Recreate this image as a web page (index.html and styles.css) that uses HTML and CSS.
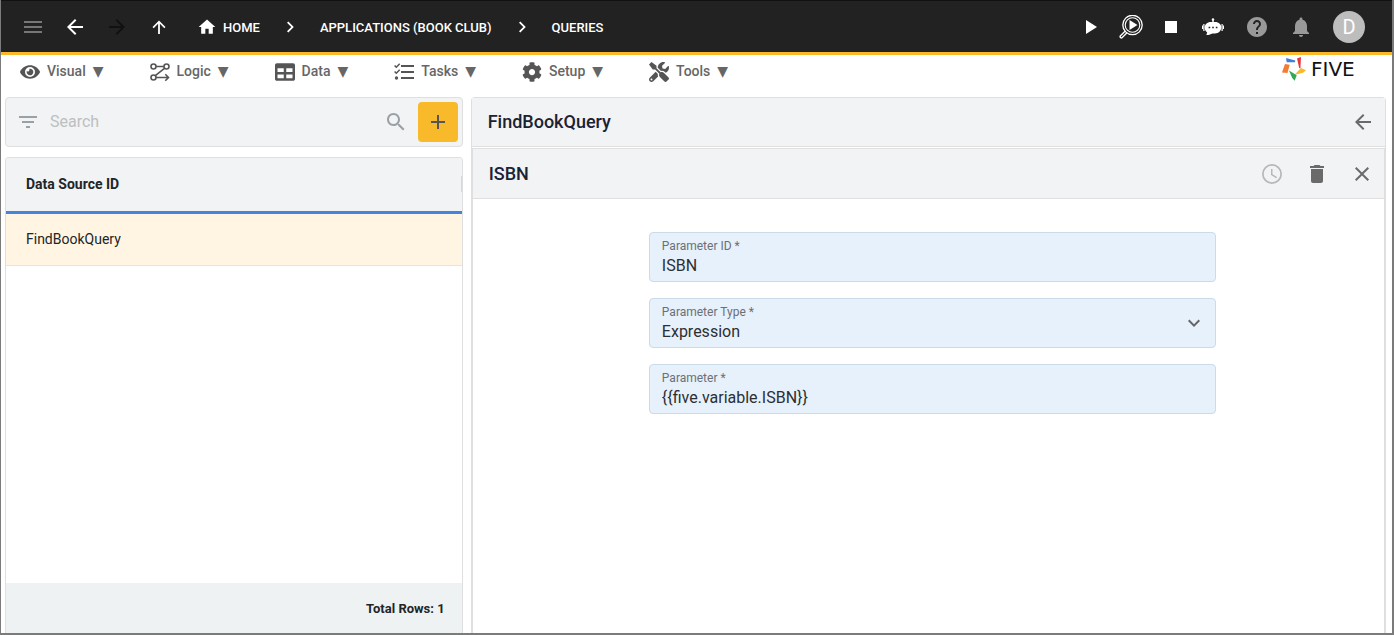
FILE: index.html
```html
<!DOCTYPE html>
<html lang="en">
<head>
<meta charset="utf-8">
<title>Five - Queries</title>
<link rel="stylesheet" href="styles.css">
</head>
<body>
<div class="window">
  <header class="topbar">
    <div class="nav-buttons">
      <button class="icon-btn dim" aria-label="Menu"><svg viewBox="0 0 24 24"><path d="M3 18h18v-2H3v2zm0-5h18v-2H3v2zm0-7v2h18V6H3z"/></svg></button>
      <button class="icon-btn" aria-label="Back"><svg viewBox="0 0 24 24"><path d="M20 11H7.800l5.600-5.600L12 4l-8 8 8 8 1.400-1.400L7.800 13H20z"/></svg></button>
      <button class="icon-btn off" aria-label="Forward" disabled><svg viewBox="0 0 24 24"><path d="M12 4l-1.400 1.400 5.600 5.600H4v2h12.200l-5.600 5.600L12 20l8-8z"/></svg></button>
      <button class="icon-btn" aria-label="Up"><svg viewBox="0 0 24 24"><path d="M5.500 12l1.200 1.200 4.400-4.400V19h1.800V8.800l4.400 4.400 1.200-1.200L12 5.500z"/></svg></button>
    </div>
    <nav class="crumbs" aria-label="Breadcrumb">
      <a href="#home"><svg class="home" viewBox="0 0 24 24"><path d="M10 20v-6h4v6h5v-8h3L12 3 2 12h3v8z"/></svg>HOME</a>
      <svg class="sep" viewBox="0 0 24 24"><path d="M9 16.300L13.300 12 9 7.700l1.300-1.200 5.500 5.500-5.500 5.500z"/></svg>
      <a href="#applications">APPLICATIONS (BOOK CLUB)</a>
      <svg class="sep" viewBox="0 0 24 24"><path d="M9 16.300L13.300 12 9 7.700l1.300-1.200 5.500 5.500-5.500 5.500z"/></svg>
      <a href="#queries">QUERIES</a>
    </nav>
    <div class="actions">
      <div class="run-tools">
        <button class="icon-btn" aria-label="Run"><svg viewBox="0 0 24 24"><path d="M7 5v14l11-7z"/></svg></button>
        <button class="icon-btn" aria-label="Inspect"><svg viewBox="0 0 24 24"><g fill="none" stroke="#fff"><circle cx="13.500" cy="10" r="9.700" stroke-width="1.300"/><circle cx="13.500" cy="10" r="7.300" stroke-width="1.100"/><path d="M6.300 16l-5 5a1 1 0 0 0 0 1.300l.4.4a1 1 0 0 0 1.300 0l5-5" stroke-width="1.300"/></g><path d="M10.500 5v10l8-5z"/></svg></button>
        <button class="icon-btn" aria-label="Stop"><svg viewBox="0 0 24 24"><path d="M6 6h12v12H6z"/></svg></button>
      </div>
      <div class="user-tools">
        <button class="icon-btn" aria-label="Assistant"><svg viewBox="0 0 24 24"><path fill-rule="evenodd" d="M12 3.300a1.300 1.300 0 0 1 .7 2.400V7h1.300c4 0 6.300 2.500 6.300 5.500S17.500 18.500 14 18.500h-2.500L7.500 20l-2.200.1.900-2.600C4.700 16.500 3.700 14.500 3.700 12.500c0-3 2.300-5.500 6.300-5.500h1.300V5.700A1.300 1.300 0 0 1 12 3.300zM7.600 11.700v1.600h1.600v-1.600zm3.600 0v1.600h1.600v-1.600zm3.600 0v1.600h1.600v-1.600z"/><path d="M2.300 9h1.200v7H2.300zM20.500 9h1.200v7h-1.200zM1 10.500h1V14H1zm21 0h1V14h-1z"/></svg></button>
        <button class="icon-btn gray" aria-label="Help"><svg viewBox="0 0 24 24"><path d="M12 2C6.480 2 2 6.480 2 12s4.480 10 10 10 10-4.480 10-10S17.520 2 12 2zm1 17h-2v-2h2v2zm2.070-7.750l-.9.920C13.450 12.900 13 13.500 13 15h-2v-.5c0-1.100.45-2.100 1.170-2.830l1.240-1.260c.37-.36.59-.86.59-1.410 0-1.100-.9-2-2-2s-2 .9-2 2H8c0-2.210 1.790-4 4-4s4 1.790 4 4c0 .88-.36 1.680-.93 2.250z"/></svg></button>
        <button class="icon-btn gray" aria-label="Notifications"><svg viewBox="0 0 24 24"><path d="M12 22c1.100 0 2-.9 2-2h-4c0 1.100.89 2 2 2zm6-6v-5c0-3.070-1.640-5.640-4.500-6.320V4c0-.83-.67-1.500-1.500-1.500s-1.500.67-1.500 1.500v.68C7.630 5.360 6 7.920 6 11v5l-2 2v1h16v-1l-2-2z"/></svg></button>
        <button class="avatar" aria-label="Account">D</button>
      </div>
    </div>
  </header>

  <div class="menubar">
    <nav class="menus" aria-label="Main">
      <button class="menu"><svg viewBox="0 0 576 512"><path d="M572.520 241.400C518.290 135.590 410.930 64 288 64S57.680 135.640 3.480 241.410a32.350 32.350 0 0 0 0 29.190C57.710 376.410 165.070 448 288 448s230.320-71.640 284.520-177.410a32.350 32.350 0 0 0 0-29.190zM288 400a144 144 0 1 1 144-144 143.930 143.930 0 0 1-144 144zm0-240a95.310 95.310 0 0 0-25.310 3.790 47.850 47.850 0 0 1-66.900 66.900A95.780 95.780 0 1 0 288 160z"/></svg><span>Visual</span> <span class="caret">▼</span></button>
      <button class="menu"><svg viewBox="0 0 20 20"><g fill="none" stroke="#555" stroke-width="1.600"><circle cx="3.500" cy="4.500" r="2.500"/><circle cx="16.500" cy="4.500" r="2.500"/><circle cx="3.500" cy="15.500" r="2.500"/><path d="M6 4.500h8M14.800 6.200L5.300 13.700M6 15.500h12M15.300 12.300l3.200 3.200-3.200 3.200"/></g></svg><span>Logic</span> <span class="caret">▼</span></button>
      <button class="menu"><svg viewBox="0 0 512 512"><path d="M464 32H48C21.490 32 0 53.490 0 80v352c0 26.510 21.490 48 48 48h416c26.510 0 48-21.490 48-48V80c0-26.510-21.490-48-48-48zM224 416H64v-96h160v96zm0-160H64v-96h160v96zm224 160H288v-96h160v96zm0-160H288v-96h160v96z"/></svg><span>Data</span> <span class="caret">▼</span></button>
      <button class="menu"><svg viewBox="0 0 20 20"><path d="M7 3h13v2H7zM7 9h13v2H7zM7 15h13v2H7z"/><circle cx="2.500" cy="16" r="1.700"/><path fill="none" stroke="#555" stroke-width="1.500" d="M.6 3.500l1.700 1.700L5.700 1.800M.6 9.500l1.700 1.700 3.400-3.400"/></svg><span>Tasks</span> <span class="caret">▼</span></button>
      <button class="menu"><svg viewBox="0 0 512 512"><path d="M487.400 315.700l-42.600-24.600c4.300-23.200 4.300-47 0-70.200l42.600-24.600c4.900-2.800 7.100-8.600 5.500-14-11.100-35.600-30-67.800-54.700-94.600-3.800-4.100-10-5.100-14.800-2.300L380.800 110c-17.900-15.400-38.500-27.300-60.800-35.100V25.800c0-5.600-3.900-10.500-9.400-11.700-36.700-8.200-74.300-7.800-109.200 0-5.500 1.200-9.400 6.100-9.400 11.700V75c-22.200 7.900-42.800 19.800-60.800 35.100L88.700 85.500c-4.900-2.800-11-1.900-14.800 2.300-24.700 26.700-43.600 58.900-54.700 94.600-1.700 5.400.6 11.200 5.500 14L67.300 221c-4.300 23.200-4.300 47 0 70.200l-42.600 24.600c-4.900 2.800-7.100 8.600-5.500 14 11.100 35.600 30 67.800 54.700 94.600 3.800 4.100 10 5.100 14.800 2.300l42.600-24.600c17.900 15.400 38.500 27.300 60.800 35.100v49.200c0 5.600 3.900 10.500 9.400 11.700 36.700 8.200 74.300 7.800 109.200 0 5.500-1.200 9.400-6.100 9.400-11.700v-49.200c22.200-7.900 42.800-19.800 60.800-35.100l42.600 24.600c4.900 2.800 11 1.900 14.800-2.300 24.700-26.700 43.600-58.900 54.700-94.600 1.500-5.500-.7-11.300-5.600-14.100zM256 336c-44.100 0-80-35.900-80-80s35.900-80 80-80 80 35.900 80 80-35.900 80-80 80z"/></svg><span>Setup</span> <span class="caret">▼</span></button>
      <button class="menu"><svg viewBox="0 0 512 512"><path d="M501.100 395.700L384 278.600c-23.100-23.100-57.600-27.600-85.400-13.900L192 158.100V96L64 0 0 64l96 128h62.100l106.600 106.600c-13.600 27.800-9.200 62.300 13.900 85.400l117.100 117.100c14.600 14.600 38.200 14.600 52.700 0l52.700-52.700c14.500-14.600 14.500-38.200 0-52.700zM331.700 225c28.300 0 54.900 11 74.900 31l19.400 19.400c15.800-6.900 30.800-16.500 43.800-29.500 37.100-37.100 49.700-89.300 37.900-136.700-2.200-9-13.500-12.100-20.100-5.500l-74.400 74.400-67.900-11.300L334 98.900l74.400-74.400c6.600-6.600 3.400-17.900-5.700-20.200-47.400-11.700-99.600.9-136.600 37.900-28.500 28.500-41.900 66.100-41.200 103.600l82.100 82.100c8.100-1.900 16.500-2.900 24.700-2.900zm-103.900 82l-56.700-56.700L18.700 402.800c-25 25-25 65.500 0 90.500s65.500 25 90.500 0l123.600-123.600c-7.600-19.900-9.900-41.600-5-62.700zM64 472c-13.200 0-24-10.800-24-24 0-13.300 10.700-24 24-24s24 10.700 24 24c0 13.200-10.700 24-24 24z"/></svg><span>Tools</span> <span class="caret">▼</span></button>
    </nav>
    <a class="brand" href="#five">
      <svg viewBox="0 0 24 24"><path fill="#3f7fd9" d="M4 1l9.300 2.500-.3 1.800H4.700z"/><path fill="#e5383b" d="M15 1.500L19 0l-.6 11.500-1.200-.6z"/><path fill="#fbb829" d="M12.500 17.700L19 11l5 2.300-3 2.500z"/><path fill="#34a853" d="M7 13.500l7.700 4.700-2 5.500-2.500-2.700z"/><path fill="#f47b30" d="M3 7l4.700.8L5.500 16 0 15.500z"/></svg>
      <span>FIVE</span>
    </a>
  </div>

  <main class="content">
    <section class="list">
      <div class="search">
        <svg class="filter" viewBox="0 0 24 24"><path d="M10 18h4v-2h-4v2zM3 6v2h18V6H3zm3 7h12v-2H6v2z"/></svg>
        <input type="search" placeholder="Search" aria-label="Search">
        <svg class="lens" viewBox="0 0 24 24"><path d="M15.500 14h-.79l-.28-.27C15.410 12.590 16 11.110 16 9.500 16 5.910 13.090 3 9.500 3S3 5.910 3 9.500 5.910 16 9.500 16c1.610 0 3.090-.59 4.230-1.570l.27.28v.79l5 4.990L20.490 19l-4.990-5zm-6 0C7.010 14 5 11.990 5 9.500S7.010 5 9.500 5 14 7.010 14 9.500 11.990 14 9.500 14z"/></svg>
        <button class="add" aria-label="Add"><svg viewBox="0 0 24 24"><path d="M19 13h-6v6h-2v-6H5v-2h6V5h2v6h6v2z"/></svg></button>
      </div>
      <div class="grid">
        <table>
          <thead><tr><th scope="col"><span class="col-head">Data Source ID</span></th></tr></thead>
          <tbody><tr><td>FindBookQuery</td></tr></tbody>
        </table>
        <div class="total">Total Rows: 1</div>
      </div>
    </section>

    <section class="detail">
      <div class="bar">
        <h1>FindBookQuery</h1>
        <button class="icon-btn tool" aria-label="Back to list"><svg viewBox="0 0 24 24"><path d="M20 11H7.800l5.600-5.600L12 4l-8 8 8 8 1.400-1.400L7.800 13H20z"/></svg></button>
      </div>
      <div class="sheet">
        <div class="bar">
          <h2>ISBN</h2>
          <div class="tools">
            <button class="icon-btn tool faded" aria-label="History"><svg viewBox="0 0 24 24"><path d="M12 2a10 10 0 1 0 0 20 10 10 0 0 0 0-20zm0 18.300a8.300 8.300 0 1 1 0-16.600 8.300 8.300 0 0 1 0 16.600zM12.500 7H11v6l5.200 3.200.8-1.300-4.500-2.700z"/></svg></button>
            <button class="icon-btn tool" aria-label="Delete"><svg viewBox="0 0 24 24"><path d="M6 19c0 1.100.9 2 2 2h8c1.100 0 2-.9 2-2V7H6v12zM19 4h-3.500l-1-1h-5l-1 1H5v2h14V4z"/></svg></button>
            <button class="icon-btn tool" aria-label="Close"><svg viewBox="0 0 24 24"><path d="M19 6.400L17.600 5 12 10.600 6.400 5 5 6.400l5.600 5.600L5 17.600 6.400 19l5.600-5.600 5.600 5.600 1.400-1.400-5.600-5.600z"/></svg></button>
          </div>
        </div>
        <form class="form">
          <div class="field">
            <label for="pid">Parameter ID *</label>
            <input id="pid" type="text" value="ISBN">
          </div>
          <div class="field pick">
            <label for="ptype">Parameter Type *</label>
            <select id="ptype"><option>Expression</option></select>
            <svg viewBox="0 0 24 24"><path d="M7.400 8.600L12 13.200l4.600-4.600L18 10l-6 6-6-6z"/></svg>
          </div>
          <div class="field">
            <label for="param">Parameter *</label>
            <input id="param" type="text" value="{{five.variable.ISBN}}">
          </div>
        </form>
      </div>
    </section>
  </main>
</div>
</body>
</html>
```
FILE: styles.css
```css
* { box-sizing: border-box; }

body {
  margin: 0;
  font-family: Roboto, "Liberation Sans", sans-serif;
  font-size: 14px;
  color: #212529;
  background: #fff;
}

button {
  border: 0;
  padding: 0;
  background: none;
  font: inherit;
  color: inherit;
}

svg { display: block; flex: none; fill: currentColor; }
a { color: inherit; text-decoration: none; }

.window {
  display: flex;
  flex-direction: column;
  min-height: 100vh;
  border: solid #7b7b7b;
  border-width: 0 2px 2px 1px;
}

/* Top bar */
.topbar {
  display: flex;
  align-items: center;
  height: 55px;
  padding: 0 27px 0 20px;
  border-top: 1px solid #111;
  border-bottom: 3px solid #fbb829;
  background: #222;
  color: #fff;
}

.icon-btn { display: block; width: 24px; height: 24px; }
.icon-btn svg { width: 24px; height: 24px; }
.dim { color: #777; }
.off { color: #111; }
.gray { color: #999; }

.nav-buttons { display: flex; gap: 18px; }

.crumbs {
  display: flex;
  align-items: center;
  gap: 18px;
  flex: 1;
  margin-left: 26px;
  padding-top: 1px;
  font-size: 13px;
  font-weight: 500;
}
.crumbs a { display: flex; align-items: center; gap: 6px; }
.home { width: 20px; height: 20px; }
.sep { width: 24px; height: 24px; }

.actions { display: flex; align-items: center; gap: 18px; }
.run-tools { display: flex; gap: 16px; }
.user-tools { display: flex; align-items: center; gap: 20px; }

.avatar {
  width: 32px;
  height: 32px;
  border-radius: 50%;
  background: #bdbdbd;
  color: #fff;
  font-size: 20px;
}

/* Menu bar */
.menubar {
  display: flex;
  justify-content: space-between;
  height: 42px;
  padding: 0 22px 0 19px;
}
.menus { display: flex; gap: 46px; height: 34px; }
.menu {
  display: flex;
  align-items: center;
  gap: 7px;
  font-weight: 500;
  color: #666;
}
.menu svg { width: 20px; height: 20px; color: #555; }
.menu span { padding-bottom: 2px; }
.caret { font-family: "DejaVu Sans", sans-serif; font-size: 14px; }

.brand {
  display: flex;
  align-items: center;
  gap: 5px;
  width: 88px;
  height: 28px;
  font-family: "DejaVu Sans", sans-serif;
  font-size: 20px;
  color: #111;
}
.brand svg { width: 24px; height: 24px; }

/* Panels */
.content {
  display: grid;
  grid-template-columns: minmax(0, 1fr) minmax(0, 2fr);
  gap: 8px;
  flex: 1;
  padding: 0 6px 0 4px;
}

.list { display: flex; flex-direction: column; gap: 10px; }

.search {
  display: flex;
  align-items: center;
  height: 50px;
  padding: 0 4px 0 10px;
  border: 1px solid #dfdfdf;
  border-radius: 4px;
  background: #f1f3f4;
}
.search svg { width: 24px; height: 24px; color: #9aa0a6; }
.search input {
  flex: 1;
  min-width: 0;
  padding: 0 10px 2px;
  border: 0;
  outline: 0;
  background: none;
  font: inherit;
  font-size: 16px;
}
.search input::placeholder { color: #bdbfc1; opacity: 1; }
.search .add {
  display: grid;
  place-items: center;
  width: 40px;
  height: 40px;
  margin-left: 10px;
  border-radius: 4px;
  background: #f8b92a;
}
.search .add svg { color: #555; }

.grid {
  display: flex;
  flex-direction: column;
  flex: 1;
  border: 1px solid #dfdfdf;
  border-bottom: 0;
  border-radius: 4px 4px 0 0;
  overflow: hidden;
}
table { width: 100%; border-collapse: separate; border-spacing: 0; }
th, td { padding: 0 0 2px; text-align: left; }
th {
  height: 56px;
  border-bottom: 3px solid #4385d9;
  background: #f1f3f4;
  font-weight: 700;
}
.col-head { display: block; padding-left: 20px; border-right: 1px solid #d5d7d9; }
td {
  height: 52px;
  padding-left: 20px;
  border-bottom: 1px solid #e4e4e4;
  background: #fff5e2;
}
.total {
  margin-top: auto;
  padding: 2px 17px 0;
  background: #eef2f3;
  font-size: 13px;
  font-weight: 700;
  line-height: 48px;
  text-align: right;
}

.detail {
  display: flex;
  flex-direction: column;
  border: 1px solid #dfdfdf;
  border-bottom: 0;
  border-radius: 4px 4px 0 0;
}
.bar {
  display: flex;
  align-items: center;
  justify-content: space-between;
  height: 49px;
  padding: 0 10px 0 16px;
  border-bottom: 1px solid #dfdfdf;
  background: #f1f3f4;
}
.bar h1, .bar h2 {
  margin: 0;
  font-size: 18px;
  font-weight: 500;
  line-height: 20px;
  color: #1a2233;
}
.tools { display: flex; gap: 21px; }
.tool { color: #6a6a6a; }
.faded { color: #b5b7b9; }

.sheet {
  flex: 1;
  margin-top: 1px;
  border-top: 1px solid #dfdfdf;
  box-shadow: inset 1px 0 #dfdfdf, inset -1px 0 #dfdfdf;
}
.sheet .bar { height: 50px; margin: 0 1px; }

.form {
  display: flex;
  flex-direction: column;
  gap: 16px;
  margin-left: 19.4%;
  margin-right: 18.5%;
  padding-top: 33px;
}
.field {
  position: relative;
  display: flex;
  flex-direction: column;
  height: 50px;
  padding: 6px 12px 0;
  border: 1px solid #cbdbea;
  border-radius: 4px;
  background: #e7f1fb;
}
.field label { font-size: 12px; line-height: 14px; color: #6a7076; }
.field input, .field select {
  appearance: none;
  width: 100%;
  height: 24px;
  padding: 0;
  border: 0;
  outline: 0;
  background: none;
  font: inherit;
  font-size: 16px;
  color: #2b2f33;
}
.pick svg {
  position: absolute;
  top: 12px;
  right: 9px;
  width: 24px;
  height: 24px;
  color: #666;
  pointer-events: none;
}
```
